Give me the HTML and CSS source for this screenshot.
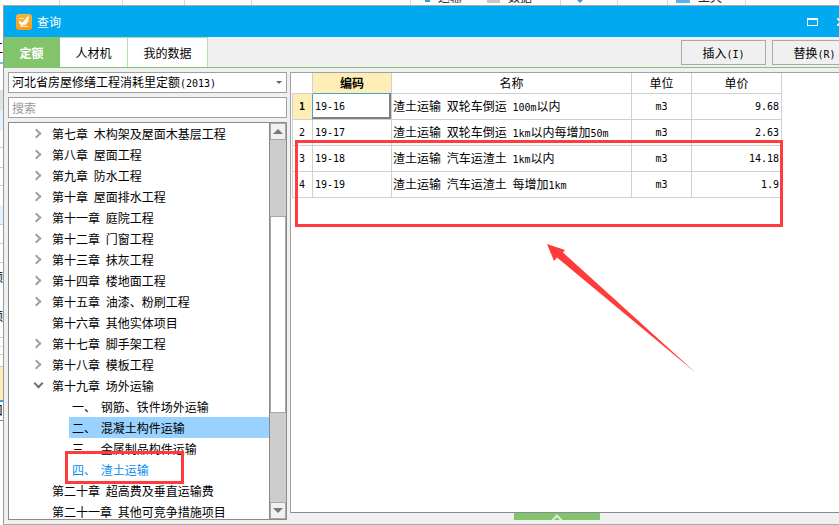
FILE: index.html
```html
<!DOCTYPE html>
<html>
<head>
    <title>查询</title>
    <meta charset="utf-8">
    <link rel="stylesheet" href="styles.css">
</head>
<body>
    <div class="backtop">
        <div class="bt c1"></div>
        <div class="bt c2"></div>
        <div class="bt c3"></div>
        <div class="bt c4"></div>
        <div class="bt c5"><span class="clip clip-text">迁移</span></div>
        <div class="bt c6"><span class="clip clip-icon-blue"></span><span class="clip clip-text">运输</span><span class="clip clip-icon-gray"></span><span class="clip clip-text">数据</span></div>
        <div class="bt c7"><span class="clip clip-tri"></span></div>
        <div class="bt c8"></div>
        <div class="bt c9"><span class="clip clip-icon-sky"></span><span class="clip clip-text">工具</span></div>
        <div class="bt c10"></div>
    </div>
    <div class="under">
        <div class="backleft">
            <span class="frag frag1">工</span>
            <span class="frag frag2">额</span>
            <span class="frag frag3">额</span>
            <span class="frag frag4">口</span>
        </div>

        <div class="dialog">
            <div class="titlebar">
                <svg class="logo" width="16" height="16" viewBox="0 0 16 16">
                    <defs>
                        <linearGradient id="logoFill" x1="0" y1="0" x2="0" y2="1">
                            <stop offset="0" stop-color="#fbb53a"/>
                            <stop offset="1" stop-color="#f79a14"/>
                        </linearGradient>
                    </defs>
                    <rect width="16" height="16" rx="3" fill="url(#logoFill)"/>
                    <path d="M2.5 4.5 H8 M4 12.5 H12" fill="none" stroke="#ffe3ad" stroke-width="1.2"/>
                    <path d="M3.5 7.5 L6 11 L12.5 3" fill="none" stroke="#fff" stroke-width="2.2"/>
                    <path d="M12.5 6 L8.5 11" fill="none" stroke="#fff" stroke-width="1.4"/>
                </svg>
                <span class="title-text">查询</span>
                <span class="maxbtn"></span>
                <svg class="closebtn" width="8" height="8" viewBox="0 0 8 8">
                    <path d="M0 0 L8 8 M8 0 L0 8" stroke="#fff" stroke-width="1.6"/>
                </svg>
            </div>

            <div class="tabbar">
                <div class="tab tab-on">定额</div>
                <div class="tab tab-rcj">人材机</div>
                <div class="tab tab-mine">我的数据</div>
                <div class="actions">
                    <div class="btn">插入<span class="lat">(I)</span></div>
                    <div class="btn">替换<span class="lat">(R)</span></div>
                </div>
            </div>

            <div class="main">
                <div class="leftcol">
                    <div class="combo">
                        <span>河北省房屋修缮工程消耗里定额<span class="lat">(2013)</span></span>
                        <span class="combo-arrow"></span>
                    </div>
                    <div class="search">搜索</div>
                    <div class="tree">
                        <div class="tree-list">
                            <div class="row kids">第七章 木构架及屋面木基层工程</div>
                            <div class="row kids">第八章 屋面工程</div>
                            <div class="row kids">第九章 防水工程</div>
                            <div class="row kids">第十章 屋面排水工程</div>
                            <div class="row kids">第十一章 庭院工程</div>
                            <div class="row kids">第十二章 门窗工程</div>
                            <div class="row kids">第十三章 抹灰工程</div>
                            <div class="row kids">第十四章 楼地面工程</div>
                            <div class="row kids">第十五章 油漆、粉刷工程</div>
                            <div class="row">第十六章 其他实体项目</div>
                            <div class="row kids">第十七章 脚手架工程</div>
                            <div class="row kids">第十八章 模板工程</div>
                            <div class="row kids open">第十九章 场外运输</div>
                            <div class="row sub">一、 钢筋、铁件场外运输</div>
                            <div class="row sub picked">二、 混凝土构件运输</div>
                            <div class="row sub">三、 金属制品构件运输</div>
                            <div class="row sub current">四、 渣土运输</div>
                            <div class="row">第二十章 超高费及垂直运输费</div>
                            <div class="row">第二十一章 其他可竞争措施项目</div>
                        </div>
                        <div class="vbar">
                            <div class="vbtn"><span class="tri-up"></span></div>
                            <div class="vtrack-top"></div>
                            <div class="vthumb"></div>
                            <div class="vtrack-bot"></div>
                            <div class="vbtn"><span class="tri-down"></span></div>
                        </div>
                    </div>
                </div>

                <div class="rightcol">
                    <div class="gridbox">
                        <table class="grid">
                            <tr class="head">
                                <th class="w-no"></th>
                                <th class="w-code th-on">编码</th>
                                <th class="w-name">名称</th>
                                <th class="w-unit">单位</th>
                                <th class="w-price">单价</th>
                            </tr>
                            <tr>
                                <td class="no no-on">1</td>
                                <td class="code cell-on">19-16</td>
                                <td class="name">渣土运输 双轮车倒运 <span class="lat">100m</span>以内</td>
                                <td class="unit">m3</td>
                                <td class="price">9.68</td>
                            </tr>
                            <tr>
                                <td class="no">2</td>
                                <td class="code">19-17</td>
                                <td class="name">渣土运输 双轮车倒运 <span class="lat">1km</span>以内每增加<span class="lat">50m</span></td>
                                <td class="unit">m3</td>
                                <td class="price">2.63</td>
                            </tr>
                            <tr>
                                <td class="no">3</td>
                                <td class="code">19-18</td>
                                <td class="name">渣土运输 汽车运渣土 <span class="lat">1km</span>以内</td>
                                <td class="unit">m3</td>
                                <td class="price">14.18</td>
                            </tr>
                            <tr>
                                <td class="no">4</td>
                                <td class="code">19-19</td>
                                <td class="name">渣土运输 汽车运渣土 每增加<span class="lat">1km</span></td>
                                <td class="unit">m3</td>
                                <td class="price">1.9</td>
                            </tr>
                        </table>
                    </div>
                    <div class="footer">
                        <div class="handle"><span class="handle-up"></span></div>
                    </div>
                </div>
            </div>
        </div>
    </div>

    <!-- red marks drawn on top of the screenshot -->
    <div class="mark mark-table"></div>
    <div class="mark mark-tree"></div>
    <svg class="mark-arrow" width="839" height="525" viewBox="0 0 839 525">
        <polygon points="547,244 565,250 563,252.5 696,373 557,257.5 554,261" fill="#ff3b3b"/>
    </svg>
</body>
</html>
```

FILE: styles.css
```css
html, body {
    margin: 0;
    height: 525px;
    overflow: hidden;
}

body {
    background-color: #fff;
    font-family: "Noto Sans CJK SC", "Liberation Sans", sans-serif;
    font-size: 12px;
    color: #000;
    position: relative;
}

.lat {
    font-family: "DejaVu Sans Mono", monospace;
    font-size: 10px;
}

/* the spreadsheet behind the dialog */
.backtop {
    display: flex;
    height: 5px;
    overflow: hidden;
}

.bt {
    box-sizing: border-box;
    flex: none;
    height: 5px;
    border-right: 1px solid #d8d8d8;
    display: flex;
    overflow: hidden;
}

.c1 { width: 60px; }
.c2 { width: 63px; }
.c3 { width: 62px; }
.c4 { width: 67px; }
.c5 { width: 159px; padding-left: 152px; }
.c6 { width: 150px; padding-left: 14px; }
.c7 { width: 57px; padding-left: 16px; }
.c8 { width: 50px; }
.c9 { width: 78px; padding-left: 8px; }
.c10 { width: 94px; }

.clip {
    flex: none;
}

.clip-text {
    font-size: 12px;
    line-height: 12px;
    margin-top: -9px;
    margin-left: 8px;
    color: #222;
}

.clip-icon-blue {
    width: 5px;
    height: 2px;
    background-color: #2f9fe0;
}

.clip-icon-gray {
    width: 13px;
    height: 3px;
    margin-left: 25px;
    background-color: #c8c8c8;
}

.clip-tri {
    width: 0;
    height: 0;
    border-left: 3px solid transparent;
    border-right: 3px solid transparent;
    border-top: 3px solid #2f9fe0;
}

.clip-icon-sky {
    width: 14px;
    height: 3px;
    background-color: #55b5ea;
}

.under {
    display: flex;
    height: 520px;
}

.backleft {
    flex: none;
    width: 3px;
    position: relative;
    overflow: hidden;
    background: linear-gradient(#fff 0 57px, #6fc0e8 57px 59px, #fff 59px 85px, #dde5e0 85px 105px, #e2f2fa 105px 125px,
        #fff 125px 142px, #ccc 142px 143px, #fff 143px 162px, #ccc 162px 163px, #fff 163px 180px, #ccc 180px 181px,
        #fff 181px 200px, #e2f2fa 200px 219px, #ccc 219px 220px, #fff 220px 238px, #ccc 238px 239px, #fff 239px 257px,
        #ccc 257px 258px, #fff 258px 332px, #ccc 332px 333px, #fff 333px 341px, #ddd 341px 342px, #fff 342px 349px,
        #b5dfa8 349px 350px, #fff 350px 361px, #b5dfa8 361px 362px, #feeeb5 362px 395px, #3ba5d8 395px 397px,
        #fff 397px 415px, #888 415px 416px, #fff 416px);
}

.frag {
    position: absolute;
    right: 0;
    line-height: 12px;
}

.frag1 { top: 37px; }
.frag2 { top: 266px; }
.frag3 { top: 305px; }
.frag4 { top: 399px; }

/* dialog window */
.dialog {
    flex: none;
    box-sizing: border-box;
    width: 860px;
    height: 520px;
    border-top: 1px solid #a8a8a8;
    border-left: 1px solid #9a9a9a;
    border-bottom: 1px solid #aaa;
    background-color: #f0f0f0;
    display: flex;
    flex-direction: column;
}

.titlebar {
    flex: none;
    height: 31px;
    background-color: #00a9f0;
    display: flex;
    align-items: center;
    color: #fff;
}

.logo {
    margin-left: 12px;
}

.title-text {
    margin-left: 5px;
}

.maxbtn {
    box-sizing: border-box;
    width: 11px;
    height: 8px;
    margin-left: 746px;
    border: 1px solid #fff;
    border-top-width: 2px;
}

.closebtn {
    margin-left: 19px;
}

.tabbar {
    flex: none;
    box-sizing: border-box;
    height: 31px;
    border-bottom: 1px solid #82c46c;
    display: flex;
}

.tab {
    box-sizing: border-box;
    background-color: #fff;
    border-top: 1px solid #b5dfa8;
    border-right: 1px solid #b5dfa8;
    text-align: center;
    line-height: 29px;
}

.tab-on {
    width: 56px;
    background-color: #82c46c;
    border-color: #82c46c;
    color: #fff;
    font-weight: bold;
}

.tab-rcj {
    width: 68px;
}

.tab-mine {
    width: 80px;
}

.actions {
    display: flex;
    gap: 6px;
    margin-left: 473px;
    padding-top: 3px;
}

.btn {
    box-sizing: border-box;
    width: 85px;
    height: 25px;
    border: 1px solid #aaa;
    text-align: center;
    line-height: 23px;
}

.main {
    flex: 1;
    display: flex;
    min-height: 0;
}

/* left side */
.leftcol {
    flex: none;
    width: 279px;
    margin: 4px 3px 4px 4px;
    display: flex;
    flex-direction: column;
    gap: 4px;
}

.combo, .search {
    box-sizing: border-box;
    flex: none;
    height: 21px;
    background-color: #fff;
    border: 1px solid #a0a0a0;
    padding-left: 3px;
    line-height: 19px;
}

.combo {
    display: flex;
    justify-content: space-between;
    align-items: center;
    padding-right: 4px;
}

.combo-arrow {
    width: 0;
    height: 0;
    border-left: 3px solid transparent;
    border-right: 3px solid transparent;
    border-top: 3px solid #666;
}

.search {
    color: #999;
}

.tree {
    flex: 1;
    min-height: 0;
    box-sizing: border-box;
    background-color: #fff;
    border: 1px solid #8a8a8a;
    display: flex;
    overflow: hidden;
}

.tree-list {
    flex: 1;
    min-width: 0;
    overflow: hidden;
}

.row {
    position: relative;
    height: 21px;
    line-height: 22px;
    padding-left: 43px;
    white-space: nowrap;
    word-spacing: 3px;
}

.kids::before {
    content: "";
    position: absolute;
    left: 24px;
    top: 7px;
    width: 5px;
    height: 5px;
    border-top: 2px solid #a0a0a0;
    border-right: 2px solid #a0a0a0;
    transform: rotate(45deg);
}

.open::before {
    left: 26px;
    top: 5px;
    border-color: #707070;
    transform: rotate(135deg);
}

.sub {
    margin-left: 60px;
    padding-left: 3px;
    word-spacing: 2px;
}

.picked {
    background-color: #99d1ff;
}

.current {
    color: #0a8cf0;
}

.vbar {
    flex: none;
    width: 16px;
    border-left: 1px solid #8a8a8a;
    display: flex;
    flex-direction: column;
}

.vbtn {
    box-sizing: border-box;
    flex: none;
    height: 17px;
    background-color: #f0f0f0;
    border: 1px solid #a8a8a8;
    display: flex;
    align-items: center;
    justify-content: center;
}

.tri-up, .tri-down {
    width: 0;
    height: 0;
    border-left: 5px solid transparent;
    border-right: 5px solid transparent;
}

.tri-up {
    border-bottom: 5px solid #777;
}

.tri-down {
    border-top: 5px solid #777;
}

.vtrack-top {
    flex: none;
    height: 76px;
    background-color: #cdcdcd;
}

.vthumb {
    box-sizing: border-box;
    flex: none;
    height: 197px;
    background-color: #fff;
    border: 1px solid #a8a8a8;
}

.vtrack-bot {
    flex: 1;
    background-color: #cdcdcd;
}

/* right side */
.rightcol {
    flex: 1;
    min-width: 0;
    display: flex;
    flex-direction: column;
}

.gridbox {
    flex: 1;
    margin-top: 4px;
    padding: 0 0 0 1px;
    background-color: #fff;
    border-top: 1px solid #a0a0a0;
    border-left: 1px solid #a0a0a0;
    border-bottom: 1px solid #8a8a9a;
}

.grid {
    table-layout: fixed;
    width: 490px;
    border-collapse: separate;
    border-spacing: 0;
}

.grid th, .grid td {
    box-sizing: border-box;
    padding: 0;
    border-right: 1px solid #d0d0d0;
    border-bottom: 1px solid #d0d0d0;
    white-space: nowrap;
    overflow: hidden;
}

.grid th {
    height: 21px;
    font-weight: normal;
    text-align: center;
    line-height: 18px;
}

.grid td {
    height: 26px;
    line-height: 16px;
}

.w-no { width: 21px; }
.w-code { width: 79px; }
.w-name { width: 240px; }
.w-unit { width: 60px; }
.w-price { width: 90px; }

.grid .th-on {
    background-color: #feeeb5;
    font-weight: bold;
    border-bottom: 1px solid #3ba5d8;
}

.no, .code, .unit, .price {
    font-family: "DejaVu Sans Mono", monospace;
    font-size: 10px;
}

.grid .no {
    padding-left: 6px;
    border-left: 1px solid #d0d0d0;
}

.grid .no-on {
    background-color: #feeeb5;
    font-weight: bold;
    border-right: 1px solid #3ba5d8;
}

.grid .code {
    padding-left: 2px;
}

.cell-on {
    box-shadow: inset -2px -2px 0 #808080;
}

.grid .name {
    padding-left: 1px;
    word-spacing: 3px;
}

.unit {
    text-align: center;
}

.grid .price {
    padding-right: 2px;
    text-align: right;
}

.footer {
    flex: none;
    height: 11px;
}

.handle {
    width: 86px;
    height: 7px;
    margin-left: 224px;
    background-color: #82c46c;
    display: flex;
    justify-content: center;
    overflow: hidden;
}

.handle-up {
    width: 6px;
    height: 6px;
    margin-top: 3px;
    border-top: 2px solid #d8efd0;
    border-left: 2px solid #d8efd0;
    transform: rotate(45deg);
}

/* annotations */
.mark {
    position: absolute;
    box-sizing: border-box;
    border: 3px solid #ff3b3b;
}

.mark-table {
    left: 295px;
    top: 140px;
    width: 488px;
    height: 87px;
}

.mark-tree {
    left: 65px;
    top: 451px;
    width: 119px;
    height: 33px;
}

.mark-arrow {
    position: absolute;
    left: 0;
    top: 0;
}
```
